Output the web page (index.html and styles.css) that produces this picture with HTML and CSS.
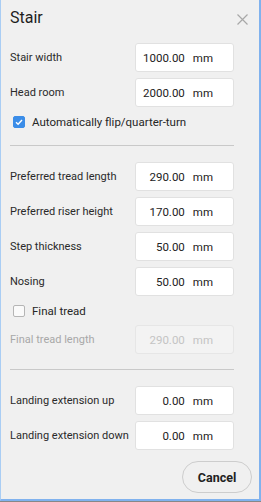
FILE: index.html
```html
<!DOCTYPE html>
<html lang="en">
<head>
    <meta charset="UTF-8">
    <title>Stair</title>
    <link rel="stylesheet" href="styles.css">
</head>
<body>
    <div class="dialog">
        <!-- Title bar -->
        <div class="header">
            <span class="title">Stair</span>
            <svg class="close" width="11" height="11" viewBox="0 0 11 11">
                <path d="M0.5 0.5 L10.5 10.5 M10.5 0.5 L0.5 10.5" stroke="#a8a8a8" stroke-width="1.2" fill="none"/>
            </svg>
        </div>

        <div class="content">
            <div class="row">
                <label>Stair width</label>
                <div class="field"><span class="num">1000.00</span><span class="unit">mm</span></div>
            </div>
            <div class="row">
                <label>Head room</label>
                <div class="field"><span class="num">2000.00</span><span class="unit">mm</span></div>
            </div>
            <div class="check">
                <span class="box checked">
                    <svg width="12" height="12" viewBox="0 0 12 12"><path d="M3 6.2 L5.1 8.2 L9 4" stroke="#fff" stroke-width="1.4" fill="none"/></svg>
                </span>
                <span>Automatically flip/quarter-turn</span>
            </div>

            <div class="sep"></div>

            <div class="row">
                <label>Preferred tread length</label>
                <div class="field"><span class="num">290.00</span><span class="unit">mm</span></div>
            </div>
            <div class="row">
                <label>Preferred riser height</label>
                <div class="field"><span class="num">170.00</span><span class="unit">mm</span></div>
            </div>
            <div class="row">
                <label>Step thickness</label>
                <div class="field"><span class="num">50.00</span><span class="unit">mm</span></div>
            </div>
            <div class="row">
                <label>Nosing</label>
                <div class="field"><span class="num">50.00</span><span class="unit">mm</span></div>
            </div>
            <div class="check">
                <span class="box"></span>
                <span>Final tread</span>
            </div>
            <div class="row disabled">
                <label>Final tread length</label>
                <div class="field"><span class="num">290.00</span><span class="unit">mm</span></div>
            </div>

            <div class="sep"></div>

            <div class="row">
                <label>Landing extension up</label>
                <div class="field"><span class="num">0.00</span><span class="unit">mm</span></div>
            </div>
            <div class="row">
                <label>Landing extension down</label>
                <div class="field"><span class="num">0.00</span><span class="unit">mm</span></div>
            </div>
        </div>

        <div class="footer">
            <button class="cancel">Cancel</button>
        </div>
    </div>
</body>
</html>
```

FILE: styles.css
```css
* {
    margin: 0;
    padding: 0;
    box-sizing: border-box;
}

body {
    font-family: Roboto, 'Liberation Sans', Arial, sans-serif;
    background: #888;
    width: 261px;
    height: 502px;
}

/* Dialog frame */
.dialog {
    width: 261px;
    height: 501px;
    background: #f0f0f0;
    border-left: 1px solid #a9cdf4;
    border-right: 2px solid #80b2ee;
    border-bottom: 2px solid #80b2ee;
    display: flex;
    flex-direction: column;
    color: #262626;
}

.header {
    height: 43px;
    display: flex;
    justify-content: space-between;
    align-items: flex-start;
    padding: 7px 11px 0 9px;
}

.title {
    font-size: 16px;
    line-height: 22px;
    color: #1e1e1e;
}

.close {
    margin-top: 7px;
}

.content {
    display: flex;
    flex-direction: column;
    padding: 0 25px 0 9px;
}

/* Rows with a label and value box */
.row {
    display: flex;
    justify-content: space-between;
    align-items: center;
    height: 29px;
    margin-bottom: 6px;
    font-size: 11px;
}

.row label {
    color: #2a2a2a;
    white-space: nowrap;
}

.field {
    width: 99px;
    height: 29px;
    background: #fff;
    border: 1px solid #e1e1e1;
    border-radius: 3px;
    display: flex;
    align-items: center;
    justify-content: flex-end;
    padding-right: 20px;
    font-size: 11.5px;
    color: #222;
}

.field .unit {
    margin-left: 8px;
}

.row.disabled label {
    color: #a8a8a8;
}

.row.disabled .field {
    background: #f3f3f3;
    border-color: #e6e6e6;
    color: #c4c4c4;
}

/* Checkbox rows */
.check {
    display: flex;
    align-items: center;
    height: 16px;
    margin-top: 1px;
    margin-bottom: 6px;
    padding-left: 3px;
    font-size: 11.5px;
    color: #262626;
    white-space: nowrap;
}

.check .box {
    width: 12px;
    height: 12px;
    border: 1px solid #b5b5b5;
    border-radius: 2px;
    background: #fafafa;
    margin-right: 7px;
    display: flex;
}

.check .box.checked {
    background: #3b8de8;
    border-color: #3b8de8;
}

.check .box svg {
    margin: -1px;
}

.sep {
    height: 1px;
    background: #c9c9c9;
    margin: 9px 0 16px 0;
}

/* Footer button */
.footer {
    display: flex;
    justify-content: flex-end;
    padding: 5px 7px 0 0;
}

.cancel {
    width: 70px;
    height: 32px;
    border: 1px solid #cdcdcd;
    border-radius: 16px;
    background: #f0f0f0;
    font-family: Roboto, 'Liberation Sans', Arial, sans-serif;
    font-size: 12.5px;
    font-weight: 700;
    color: #222;
}
```
